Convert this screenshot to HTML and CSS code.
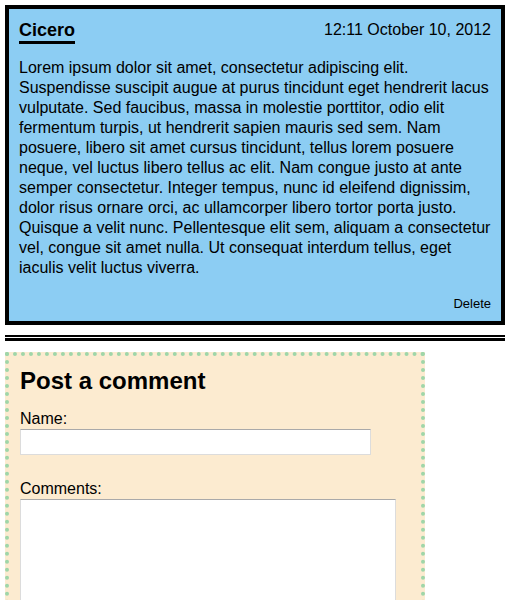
FILE: index.html
```html
<!DOCTYPE html>
<html>
<head>
<meta charset="utf-8">
<link rel="stylesheet" href="styles.css">
</head>
<body>
<article class="post">
  <header class="post-head">
    <h1 class="author">Cicero</h1>
    <span class="date">12:11 October 10, 2012</span>
  </header>
  <p class="post-body">Lorem ipsum dolor sit amet, consectetur adipiscing elit. Suspendisse suscipit augue at purus tincidunt eget hendrerit lacus vulputate. Sed faucibus, massa in molestie porttitor, odio elit fermentum turpis, ut hendrerit sapien mauris sed sem. Nam posuere, libero sit amet cursus tincidunt, tellus lorem posuere neque, vel luctus libero tellus ac elit. Nam congue justo at ante semper consectetur. Integer tempus, nunc id eleifend dignissim, dolor risus ornare orci, ac ullamcorper libero tortor porta justo. Quisque a velit nunc. Pellentesque elit sem, aliquam a consectetur vel, congue sit amet nulla. Ut consequat interdum tellus, eget iaculis velit luctus viverra.</p>
  <div class="post-foot"><a class="delete">Delete</a></div>
</article>
<div class="sep"></div>
<form class="comment">
  <h2 class="comment-title">Post a comment</h2>
  <label class="field-label">Name:</label>
  <input class="name-input" type="text">
  <label class="field-label comments-label">Comments:</label>
  <textarea class="comments-input"></textarea>
</form>
</body>
</html>
```
FILE: styles.css
```css
html, body {
  margin: 0;
  padding: 0;
  background: #ffffff;
}
body {
  padding: 5px;
  font-family: "Liberation Sans", Arial, sans-serif;
  font-size: 16px;
  color: #000;
}
.post {
  width: 500px;
  box-sizing: border-box;
  background: #8ccdf3;
  border: 4px solid #000;
  padding: 10px;
}
.post-head {
  display: flex;
  justify-content: space-between;
  align-items: flex-start;
}
.author {
  margin: 0;
  padding-top: 1px;
  font-size: 18px;
  font-weight: bold;
  line-height: 21px;
  border-bottom: 3px solid #000;
}
.date {
  font-size: 16px;
  line-height: 21px;
}
.post-body {
  margin: 14px 0 0;
  line-height: 20px;
}
.post-foot {
  display: flex;
  justify-content: flex-end;
  margin-top: 18px;
}
.delete {
  font-size: 13px;
  line-height: 15px;
  color: #000;
}
.sep {
  width: 500px;
  height: 1px;
  border-top: 2px solid #000;
  border-bottom: 3px solid #000;
  margin: 10px 0 11px;
}
.comment {
  width: 420px;
  box-sizing: border-box;
  height: 260px;
  background: #fcebd0;
  border: 4px dotted #9fd6a9;
  border-bottom: none;
  padding: 11px 11px 0;
  display: flex;
  flex-direction: column;
  align-items: flex-start;
}
.comment-title {
  margin: 0 0 15px;
  font-size: 24px;
  line-height: 28px;
  font-weight: bold;
}
.field-label {
  line-height: 18px;
  margin-bottom: 1px;
}
.comments-label {
  margin-top: 25px;
}
.name-input {
  width: 351px;
  height: 28px;
  box-sizing: border-box;
  margin: 0;
  border: 1px solid #dcdcdc;
  border-top-color: #a9a9a9;
  background: #fff;
}
.comments-input {
  width: 376px;
  height: 120px;
  box-sizing: border-box;
  margin: 0;
  border: 1px solid #dcdcdc;
  border-top-color: #a9a9a9;
  background: #fff;
  resize: none;
}
```
